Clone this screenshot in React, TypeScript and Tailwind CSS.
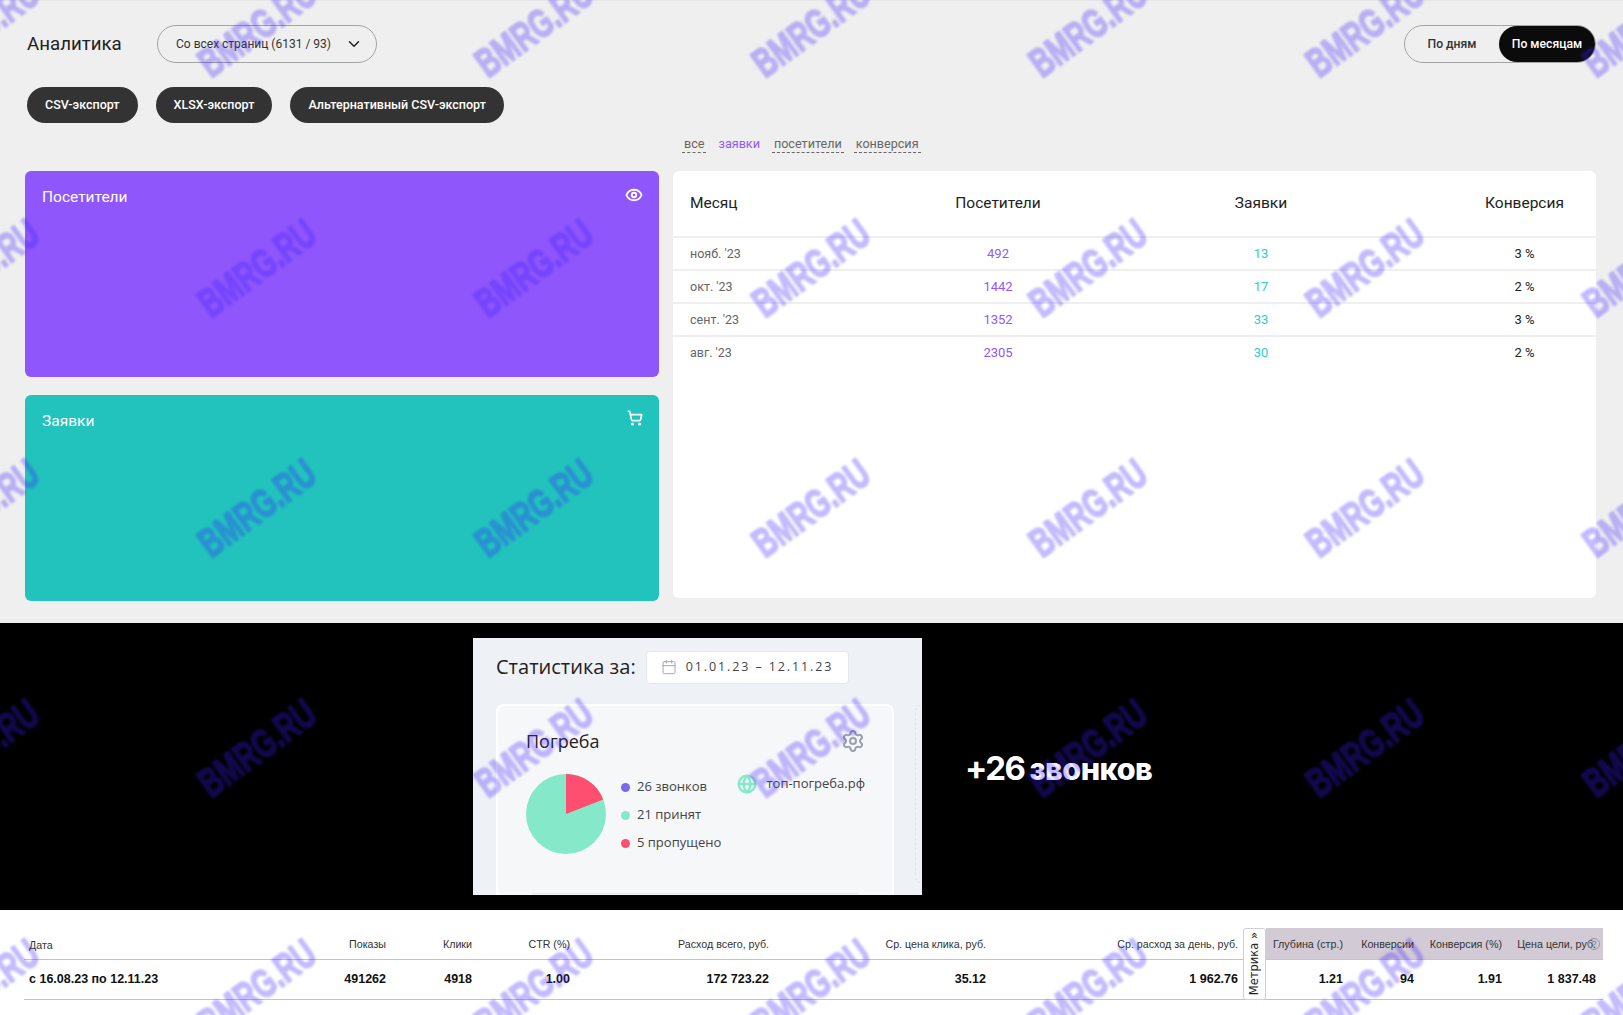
import React from 'react';
import { ChevronDown, Eye, ShoppingCart, Calendar, Settings, Globe } from 'lucide-react';

const months = [
  { month: "нояб. '23", visitors: 492, orders: 13, conv: '3 %' },
  { month: "окт. '23", visitors: 1442, orders: 17, conv: '2 %' },
  { month: "сент. '23", visitors: 1352, orders: 33, conv: '3 %' },
  { month: "авг. '23", visitors: 2305, orders: 30, conv: '2 %' },
];

const filters = [
  { label: 'все', active: false },
  { label: 'заявки', active: true },
  { label: 'посетители', active: false },
  { label: 'конверсия', active: false },
];

const legend = [
  { label: '26 звонков', color: 'bg-[#7b68ee]' },
  { label: '21 принят', color: 'bg-[#85e8c8]' },
  { label: '5 пропущено', color: 'bg-[#ff4f70]' },
];

const WM_COLS = [-20, 257, 534, 811, 1088, 1365, 1642];
const WM_ROWS = [28, 268, 508, 748, 988];

const Watermarks: React.FC = () => (
  <div className="absolute inset-0 overflow-hidden pointer-events-none">
    {WM_ROWS.map((y) =>
      WM_COLS.map((x) => (
        <div
          key={`${x}-${y}`}
          className="absolute w-[200px] h-[44px] -ml-[100px] -mt-[22px] flex items-center justify-center -rotate-[36deg] blur-[1.2px] font-['Liberation_Sans',sans-serif] font-bold text-[40px] leading-none text-[#3c1eff] [-webkit-text-stroke:2px_#3c1eff] opacity-30 scale-x-[0.7]"
          style={{ left: x, top: y }}
        >
          BMRG.RU
        </div>
      )),
    )}
  </div>
);

const StatCard: React.FC<{ title: string; color: string; icon: React.ReactNode }> = ({ title, color, icon }) => (
  <div className={`${color} h-[206px] rounded-md pl-[17px] pr-[16px] pt-[15px] flex justify-between text-white`}>
    <span className="text-[15.5px] leading-[22px]">{title}</span>
    {icon}
  </div>
);

const AnalyticsBlock: React.FC = () => (
  <section className="h-[623px] bg-[#efefef] border-t border-[#e6e6e6] px-[27px] pt-[24px] font-['Roboto',sans-serif]">
    <div className="flex items-center justify-between h-[38px]">
      <div className="flex items-center">
        <h1 className="text-[18.7px] text-[#222] w-[130px]">Аналитика</h1>
        <div className="w-[220px] h-[38px] border border-[#a5a5a5] rounded-full pl-[18px] pr-[13px] flex items-center justify-between text-[12px] text-[#333]">
          <span>Со всех страниц (6131 / 93)</span>
          <ChevronDown size={18} className="text-[#222]" />
        </div>
      </div>
      <div className="w-[192px] h-[38px] border border-[#a5a5a5] rounded-full flex items-center text-[12.2px] font-medium">
        <span className="w-[94px] text-center text-[#333]">По дням</span>
        <span className="w-[96px] h-[36px] rounded-full bg-[#0b0b0b] text-white flex items-center justify-center">По месяцам</span>
      </div>
    </div>

    <div className="flex gap-[18px] mt-[24px]">
      {['CSV-экспорт', 'XLSX-экспорт', 'Альтернативный CSV-экспорт'].map((label) => (
        <button key={label} className="h-[36px] pt-[1px] px-[18px] rounded-full bg-[#333] text-white text-[12.5px] font-medium">
          {label}
        </button>
      ))}
    </div>

    <div className="flex gap-[10px] ml-[655px] mt-[13px] h-[18px] text-[12.6px] leading-[16px]">
      {filters.map((f) =>
        f.active ? (
          <span key={f.label} className="px-[2px] text-[#9058fb]">{f.label}</span>
        ) : (
          <span key={f.label} className="px-[2px] h-[17px] text-[#666] border-b border-dashed border-[#666]">{f.label}</span>
        ),
      )}
    </div>

    <div className="flex items-start gap-[14px] -ml-[2px] mt-[17px]">
      <div className="w-[634px] flex flex-col gap-[18px]">
        <StatCard title="Посетители" color="bg-[#8f56fb]" icon={<Eye size={18} strokeWidth={2.5} />} />
        <StatCard title="Заявки" color="bg-[#22c3bd]" icon={<ShoppingCart size={16} strokeWidth={2.5} />} />
      </div>
      <div className="w-[923px] h-[427px] bg-white rounded-md">
        <div className="grid grid-cols-[254px_142px_384px_143px] items-center h-[67px] pt-[1px] border-b-2 border-[#efefef] text-[15.5px] text-[#222]">
          <span className="pl-[17px]">Месяц</span>
          <span className="text-center">Посетители</span>
          <span className="text-center">Заявки</span>
          <span className="text-center">Конверсия</span>
        </div>
        {months.map((m, i) => (
          <div
            key={m.month}
            className={`grid grid-cols-[254px_142px_384px_143px] items-center h-[33px] text-[13px] border-b-2 ${i < months.length - 1 ? 'border-[#efefef]' : 'border-transparent'}`}
          >
            <span className="pl-[17px] pt-[1px] text-[12.5px] text-[#666]">{m.month}</span>
            <span className="text-center text-[#9058fb]">{m.visitors}</span>
            <span className="text-center text-[#2ccfc5]">{m.orders}</span>
            <span className="text-center text-[#222]">{m.conv}</span>
          </div>
        ))}
      </div>
    </div>
  </section>
);

const CallsBlock: React.FC = () => (
  <section className="h-[287px] bg-black pt-[15px] pl-[473px] flex items-start font-['Open_Sans',sans-serif]">
    <div className="w-[449px] h-[257px] bg-[#eef1f5] overflow-hidden pl-[23px] pt-[13px] shrink-0">
      <div className="flex items-center gap-[10px] h-[32px]">
        <span className="text-[20px] text-[#222]">Статистика за:</span>
        <div className="w-[203px] h-[33px] bg-white border border-[#e4e7ec] rounded flex items-center pl-[14px] gap-[9px] text-[12.5px] tracking-[1.9px] text-[#444] whitespace-nowrap">
          <Calendar size={16} strokeWidth={1.5} className="text-[#a3a8b3] shrink-0" />
          01.01.23 – 12.11.23
        </div>
      </div>
      <div className="flex gap-[21px] mt-[21px] w-[600px]">
        <div className="w-[398px] h-[300px] shrink-0 bg-[#f6f7f9] border-2 border-white rounded-lg pl-[28px] pr-[27px] pt-[21px]">
          <div className="flex items-center justify-between h-[28px]">
            <span className="text-[18px] text-[#222]">Погреба</span>
            <Settings size={24} strokeWidth={2} className="text-[#9aa0ad]" />
          </div>
          <div className="flex mt-[19px]">
            <svg width="80" height="80" viewBox="0 0 80 80" className="shrink-0">
              <circle cx="40" cy="40" r="40" fill="#85e8c8" />
              <path d="M40 40 L40 0 A40 40 0 0 1 77.3 25.6 Z" fill="#ff4f70" />
            </svg>
            <div className="w-[132px] pl-[15px] pt-[3px] flex flex-col gap-[8px] text-[13px] text-[#444]">
              {legend.map((l) => (
                <div key={l.label} className="flex items-center gap-[7px] h-[20px] whitespace-nowrap">
                  <span className={`w-[9px] h-[9px] rounded-full shrink-0 ${l.color}`} />
                  {l.label}
                </div>
              ))}
            </div>
            <div className="flex items-center gap-[9px] h-[20px] text-[13px] text-[#444] whitespace-nowrap">
              <Globe size={20} strokeWidth={2.75} className="text-[#85e8c8] shrink-0" />
              топ-погреба.рф
            </div>
          </div>
          <div className="h-px bg-[#e3e6ee] mt-[39px] mx-[6px]" />
        </div>
        <div className="w-[120px] h-[180px] shrink-0 border border-dashed border-[#dfe3e8] rounded-lg" />
      </div>
    </div>
    <div className="ml-[43px] mt-[114px] flex items-baseline gap-[5px] text-white font-['Inter',sans-serif] leading-none">
      <span className="text-[33px] font-bold tracking-[-1.5px]">+26</span>
      <span className="text-[30.5px] font-extrabold tracking-[-0.5px]">звонков</span>
    </div>
  </section>
);

const COLS = 'grid-cols-[362px_86px_98px_199px_217px_252px_28px_77px_71px_88px_94px_7px]';

const headCells = ['Показы', 'Клики', 'CTR (%)', 'Расход всего, руб.', 'Ср. цена клика, руб.', 'Ср. расход за день, руб.'];
const headExtra = ['Глубина (стр.)', 'Конверсии', 'Конверсия (%)', 'Цена цели, руб.'];
const values = ['491262', '4918', '1.00', '172 723.22', '35.12', '1 962.76'];
const valuesExtra = ['1.21', '94', '1.91', '1 837.48'];

const MetricsTable: React.FC = () => (
  <section className="h-[105px] bg-white pt-[18px] pl-[24px] font-['Liberation_Sans',sans-serif]">
    <div className="relative w-[1579px]">
      <div className={`grid ${COLS} h-[32px] items-center text-[10.7px] text-[#333] border-b border-[#c4c4c4]`}>
        <span className="absolute left-[5px] top-[9px]">Дата</span>
        {headCells.map((h) => (
          <span key={h} className="text-right pt-[2px]">{h}</span>
        ))}
        <span className="h-full" />
        {headExtra.map((h) => (
          <span key={h} className="h-full pt-[2px] bg-[#d2cbd6] flex items-center justify-end whitespace-nowrap">{h}</span>
        ))}
        <span className="h-full bg-[#d2cbd6]" />
      </div>
      <div className={`grid ${COLS} h-[40px] items-center text-[12.5px] font-bold text-[#111] border-b border-[#c4c4c4]`}>
        <span className="absolute left-[5px]">с 16.08.23 по 12.11.23</span>
        {values.map((v) => (
          <span key={v} className="text-right">{v}</span>
        ))}
        <span />
        {valuesExtra.map((v) => (
          <span key={v} className="text-right">{v}</span>
        ))}
      </div>
      <div className="absolute left-[1219px] top-0 w-[23px] h-[72px] bg-white border border-[#d0d0d0] rounded-[3px] flex items-center justify-center">
        <span className="-rotate-90 whitespace-nowrap text-[11.5px] text-[#222] font-['DejaVu_Sans',sans-serif]">Метрика »</span>
      </div>
      <span className="absolute left-[1564px] top-[10px] w-[12px] h-[12px] rounded-full border border-[#9a9a9a] text-[9px] leading-[10px] text-center text-[#777]">?</span>
    </div>
  </section>
);

const App: React.FC = () => (
  <div className="relative w-full h-[1015px] overflow-hidden bg-white font-['Roboto',sans-serif]">
    <AnalyticsBlock />
    <CallsBlock />
    <MetricsTable />
    <Watermarks />
  </div>
);

export default App;
